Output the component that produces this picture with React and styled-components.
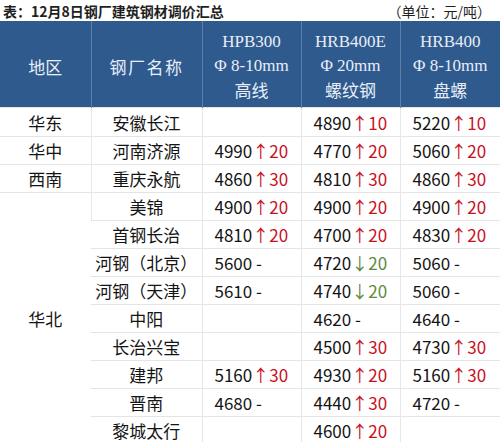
import React from "react";
import styled, { createGlobalStyle } from "styled-components";

const GlobalStyle = createGlobalStyle`
  html, body {
    margin: 0;
    padding: 0;
    background: #ffffff;
  }
  body {
    font-family: "Noto Sans CJK SC", "Noto Sans", sans-serif;
  }
`;

const Page = styled.div`
  width: 500px;
  height: 442px;
  overflow: hidden;
  background: #ffffff;
`;

const TitleBar = styled.div`
  display: flex;
  align-items: center;
  justify-content: space-between;
  height: 21px;
  padding: 0 9px 0 3px;
  color: #1f1f1f;
`;

const Title = styled.span`
  font-size: 14px;
  font-weight: 700;
`;

const Unit = styled.span`
  font-size: 14px;
`;

const Table = styled.table`
  width: 500px;
  border-collapse: collapse;
  table-layout: fixed;
  border-bottom: 3px solid #6c87a8;
`;

const HeadCell = styled.th`
  height: 82px;
  padding: 4px 0 0 0;
  background: #2e5a8e;
  color: #e9eef6;
  font-weight: 400;
  font-size: 17px;
  letter-spacing: ${(p) => (p.$wide ? "1.5px" : "0")};
  text-align: center;
  vertical-align: middle;
  border-left: 1px solid #5d80ad;
  &:first-child {
    border-left: none;
  }
`;

const Spec = styled.div`
  line-height: 24px;
  font-family: ${(p) =>
    p.$serif
      ? '"Liberation Serif", "DejaVu Serif", serif'
      : '"Noto Sans CJK SC", sans-serif'};
  font-size: 17px;
`;

const Row = styled.tr`
  height: 28px;
  &:first-child {
    height: 29px;
  }
`;

const Cell = styled.td`
  padding: ${(p) => (p.$num ? "0 0 0 12px" : "0")};
  text-align: ${(p) => (p.$num ? "left" : "center")};
  vertical-align: middle;
  font-size: 17px;
  color: #141414;
  white-space: nowrap;
  border-top: 1px solid #e4e4e4;
  border-left: 1px solid #e8e8e8;
  &:first-child {
    border-left: none;
  }
`;

const Change = styled.span`
  color: ${(p) => (p.$dir === "up" ? "#c8101e" : p.$dir === "down" ? "#5e8a3e" : "#141414")};
`;

const rows = [
  { region: "华东", name: "安徽长江", v: [null, ["4890", "up", "10"], ["5220", "up", "10"]] },
  { region: "华中", name: "河南济源", v: [["4990", "up", "20"], ["4770", "up", "20"], ["5060", "up", "20"]] },
  { region: "西南", name: "重庆永航", v: [["4860", "up", "30"], ["4810", "up", "30"], ["4860", "up", "30"]] },
  { region: "华北", span: 9, name: "美锦", v: [["4900", "up", "20"], ["4900", "up", "20"], ["4900", "up", "20"]] },
  { name: "首钢长治", v: [["4810", "up", "20"], ["4700", "up", "20"], ["4830", "up", "20"]] },
  { name: "河钢（北京）", v: [["5600", "flat"], ["4720", "down", "20"], ["5060", "flat"]] },
  { name: "河钢（天津）", v: [["5610", "flat"], ["4740", "down", "20"], ["5060", "flat"]] },
  { name: "中阳", v: [null, ["4620", "flat"], ["4640", "flat"]] },
  { name: "长治兴宝", v: [null, ["4500", "up", "30"], ["4730", "up", "30"]] },
  { name: "建邦", v: [["5160", "up", "30"], ["4930", "up", "20"], ["5160", "up", "30"]] },
  { name: "晋南", v: [["4680", "flat"], ["4440", "up", "30"], ["4720", "flat"]] },
  { name: "黎城太行", v: [null, ["4600", "up", "20"], null] },
];

const specs = [
  ["HPB300", "Φ 8-10mm", "高线"],
  ["HRB400E", "Φ 20mm", "螺纹钢"],
  ["HRB400", "Φ 8-10mm", "盘螺"],
];

function Price({ value }) {
  if (!value) return null;
  const [price, dir, amount] = value;
  if (dir === "flat") return <>{price} -</>;
  return (
    <>
      {price}
      <Change $dir={dir}>
        {dir === "up" ? "↑" : "↓"}
        {amount}
      </Change>
    </>
  );
}

export default function App() {
  return (
    <Page>
      <GlobalStyle />
      <TitleBar>
        <Title>表：12月8日钢厂建筑钢材调价汇总</Title>
        <Unit>（单位：元/吨）</Unit>
      </TitleBar>
      <Table>
        <colgroup>
          <col style={{ width: 91 }} />
          <col style={{ width: 111 }} />
          <col style={{ width: 99 }} />
          <col style={{ width: 99 }} />
          <col style={{ width: 100 }} />
        </colgroup>
        <thead>
          <tr>
            <HeadCell>地区</HeadCell>
            <HeadCell $wide>钢厂名称</HeadCell>
            {specs.map((s) => (
              <HeadCell key={s[0]}>
                <Spec $serif>{s[0]}</Spec>
                <Spec $serif>{s[1]}</Spec>
                <Spec>{s[2]}</Spec>
              </HeadCell>
            ))}
          </tr>
        </thead>
        <tbody>
          {rows.map((r) => (
            <Row key={r.name}>
              {r.region && <Cell rowSpan={r.span || 1}>{r.region}</Cell>}
              <Cell>{r.name}</Cell>
              {r.v.map((val, i) => (
                <Cell $num key={i}>
                  <Price value={val} />
                </Cell>
              ))}
            </Row>
          ))}
        </tbody>
      </Table>
    </Page>
  );
}
